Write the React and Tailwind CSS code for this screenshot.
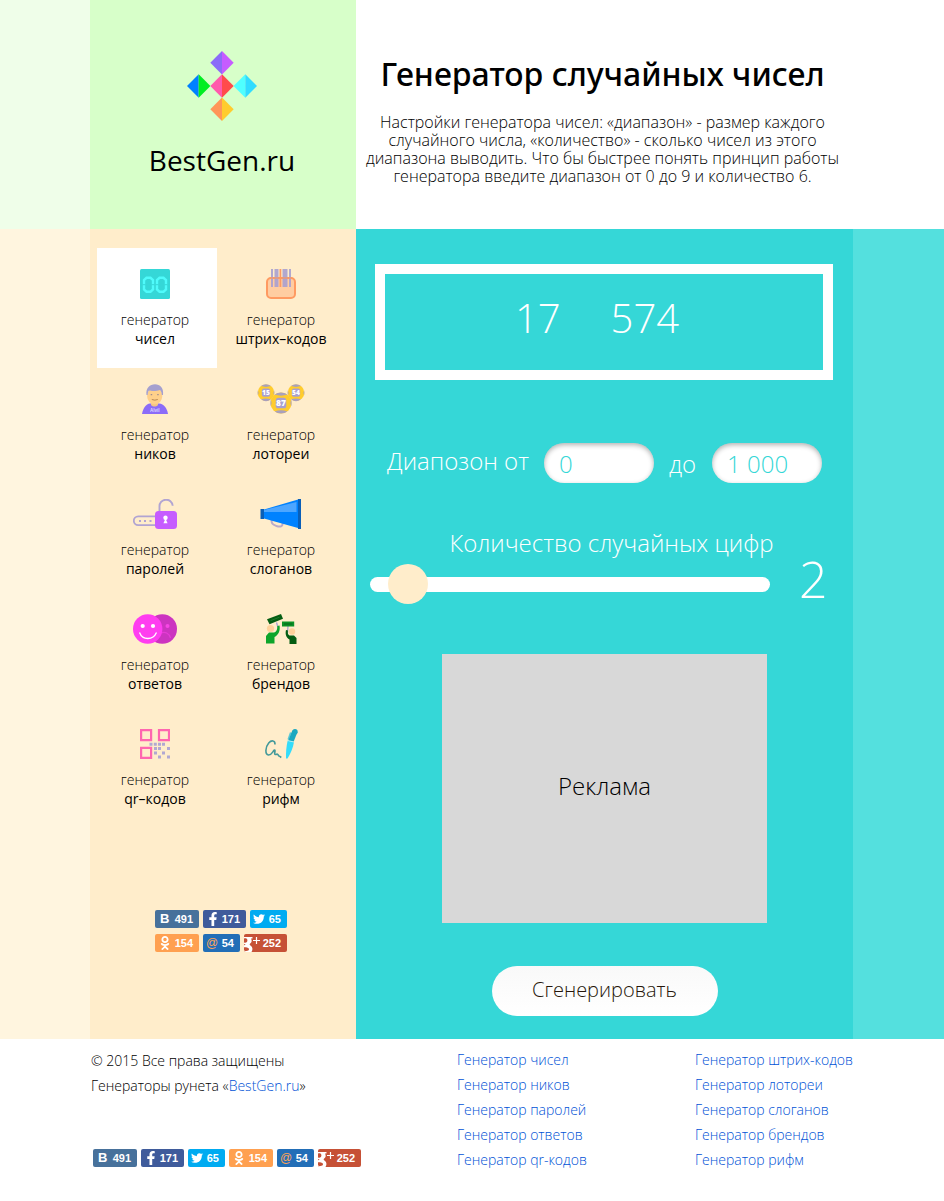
import { useState } from "react";
import { FaFacebookF, FaTwitter, FaOdnoklassniki } from "react-icons/fa";

function Logo() {
  return (
    <svg width="70" height="70" viewBox="0 0 70 70" aria-hidden="true">
      <path d="M35 0v23.4L23.3 11.7z" fill="#8b6cf8" />
      <path d="M35 0v23.4l11.7-11.7z" fill="#c65cff" />
      <path d="M11.7 23.3v23.4L0 35z" fill="#0080ff" />
      <path d="M11.7 23.3v23.4L23.4 35z" fill="#00ee22" />
      <path d="M35 23.3v23.4L23.3 35z" fill="#ff5aac" />
      <path d="M35 23.3v23.4L46.7 35z" fill="#ff4b4b" />
      <path d="M58.3 23.3v23.4L46.6 35z" fill="#4fffff" />
      <path d="M58.3 23.3v23.4L70 35z" fill="#30dcff" />
      <path d="M35 46.6V70L23.3 58.3z" fill="#ff9658" />
      <path d="M35 46.6V70l11.7-11.7z" fill="#ffcc2e" />
    </svg>
  );
}

function NumbersIcon() {
  return (
    <svg width="30" height="30" viewBox="0 0 30 30" aria-hidden="true">
      <rect width="30" height="30" rx="1.5" fill="#35d7d7" />
      <g fill="none" stroke="#4ffbfb" strokeWidth="2.400">
        <path d="M6.500 8.800h4L13 11v9.500L10.500 22.700h-4L4 20.500V11z" />
        <path d="M19.500 8.800h4L26 11v9.500l-2.500 2.200h-4L17 20.500V11z" />
      </g>
      <path d="M2.500 15.700h3M11.500 15.700h3M15.500 15.700h3M24.500 15.700h3" stroke="#35d7d7" strokeWidth="1" />
    </svg>
  );
}

function BarcodeIcon() {
  return (
    <svg width="30" height="30" viewBox="0 0 30 30" aria-hidden="true">
      <rect x="1" y="9" width="28" height="20" rx="4" fill="#ffcda1" stroke="#ff9a61" strokeWidth="2" />
      <path d="M5 0h2v18H5zM8.500 0h4v18h-4zM16.500 0h5v18h-5zM23 0h2v18h-2z" fill="#a9a0cf" opacity=".9" />
      <path d="M13.500 0h1.800v18h-1.800z" fill="#ff9a61" />
      <path d="M4 9h22" stroke="#ff9a61" strokeWidth="1.500" opacity=".75" />
    </svg>
  );
}

function NickIcon() {
  return (
    <svg width="28" height="30" viewBox="0 0 28 30" aria-hidden="true">
      <path d="M1 30c1-6 4-10 8-10.500h9c5 .5 8 4.500 9 10.500z" fill="#8b6cf8" />
      <path d="M10 17h7v4c-2 2-5 2-7 0z" fill="#f4c682" />
      <ellipse cx="13.700" cy="12" rx="7.600" ry="8.500" fill="#ffd08a" />
      <path d="M5.500 11C4.500 4 9 .3 14 .3S23 4 22 11h-1.200c0-2.500-.8-4-2-5C15 7.500 10 7 8 6.500 7 7.500 6.800 9 6.700 11z" fill="#a5a0cf" />
      <path d="M9.700 10.700h1.500M16.200 10.700h1.500" stroke="#a08d90" strokeWidth="1.300" />
      <path d="M10.800 15.500q3 1.300 6 0" stroke="#b98a55" strokeWidth="1" fill="none" />
      <text x="9" y="27.500" fontSize="4.500" fontWeight="700" fill="#ddd4ff" fontFamily="Liberation Sans, sans-serif">Alvil</text>
    </svg>
  );
}

function Ball({ cx, cy, r, label }) {
  return (
    <g>
      <circle cx={cx} cy={cy} r={r} fill="#ffcc2e" />
      <path
        d={`M${cx - r * 0.6} ${cy - r * 0.8}A${r} ${r} 0 0 1 ${cx + r * 0.6} ${cy - r * 0.8}Q${cx} ${cy - r * 0.6} ${cx - r * 0.6} ${cy - r * 0.8}z`}
        fill="#a9a0bd"
      />
      <path
        d={`M${cx - r * 0.6} ${cy + r * 0.8}A${r} ${r} 0 0 0 ${cx + r * 0.6} ${cy + r * 0.8}Q${cx} ${cy + r * 0.6} ${cx - r * 0.6} ${cy + r * 0.8}z`}
        fill="#a9a0bd"
      />
      <path
        d={`M${cx - r} ${cy - r * 0.3}Q${cx - r * 0.8} ${cy} ${cx - r} ${cy + r * 0.3}zM${cx + r} ${cy - r * 0.3}Q${cx + r * 0.8} ${cy} ${cx + r} ${cy + r * 0.3}z`}
        fill="#a9a0bd"
      />
      <rect x={cx - r * 0.5} y={cy - r * 0.5} width={r} height={r} rx={r * 0.25} fill="#a9a0cf" />
      <text
        x={cx}
        y={cy + r * 0.29}
        fontSize={r * 0.8}
        fontWeight="800"
        fill="#fff"
        textAnchor="middle"
        fontFamily="Open Sans, sans-serif"
      >
        {label}
      </text>
    </g>
  );
}

function LotteryIcon() {
  return (
    <svg width="48" height="30" viewBox="0 0 48 30" aria-hidden="true">
      <Ball cx={9} cy={8.7} r={8.3} label="15" />
      <Ball cx={39} cy={8.7} r={8.3} label="54" />
      <Ball cx={24} cy={19} r={10.5} label="87" />
    </svg>
  );
}

function PasswordIcon() {
  return (
    <svg width="44" height="30" viewBox="0 0 44 30" aria-hidden="true">
      <path d="M22 17.300H5.200a4.400 4.400 0 0 0 0 8.800H22" fill="none" stroke="#b1a4d2" strokeWidth="1.800" />
      <path d="M6 20.900h2v2H6zM11 20.900h2v2h-2zM16.500 20.900h2v2h-2z" fill="#b1a4d2" />
      <path d="M26.500 12.500V7.800a6.600 6.600 0 0 1 13.200-1" fill="none" stroke="#b1a4d2" strokeWidth="1.900" />
      <rect x="22" y="12" width="22" height="18" rx="3.500" fill="#c65cff" />
      <circle cx="32.500" cy="18.800" r="2.200" fill="#fff" />
      <path d="M31.700 19h1.600v2.500l1.300 2.800h-4.200l1.300-2.800z" fill="#fff" />
    </svg>
  );
}

function SloganIcon() {
  return (
    <svg width="42" height="30" viewBox="0 0 42 30" aria-hidden="true">
      <path d="M11.500 21c0 4 1.500 4.500 5 6 3.500 1.300 6.500.5 6-3" fill="none" stroke="#b9aacb" strokeWidth="2" />
      <path d="M4 10.500 38 .5V29L4 19.500z" fill="#0082ff" />
      <path d="M4 11 36.500 3V13H4z" fill="#4da6ff" />
      <path d="M38 0h3v30h-3zM.5 10H4v10H.5z" fill="#0a5fb8" />
    </svg>
  );
}

function AnswerIcon() {
  return (
    <svg width="44" height="30" viewBox="0 0 44 30" aria-hidden="true">
      <circle cx="29.300" cy="15" r="14.700" fill="#cc34c0" />
      <circle cx="34.500" cy="12" r="2" fill="#f846e6" />
      <path d="M28 19c4-1.500 8 0 9.500 5" fill="none" stroke="#e63cd6" strokeWidth="1.200" />
      <circle cx="14.700" cy="15" r="14.700" fill="#ff3df0" />
      <circle cx="9.700" cy="12" r="2.100" fill="#fff" />
      <circle cx="20" cy="12" r="2.100" fill="#fff" />
      <path d="M6.500 18.500c3 8 13.500 8 17 0" fill="none" stroke="#fff" strokeWidth="1.300" />
    </svg>
  );
}

function BrandIcon() {
  return (
    <svg width="32" height="30" viewBox="0 0 32 30" aria-hidden="true">
      <path d="M11.500 8.500 13.500 15M23 12l-.5 7" stroke="#a9a0cf" strokeWidth="1.300" />
      <path d="m2 5.300 14-5.300 2 4.700L4.500 10.200z" fill="#055d13" />
      <path d="m5.500 6.700 9-3.500" stroke="#1f7a2d" strokeWidth="1" />
      <path d="M17 7.500h12.200v5H17z" fill="#0b9226" />
      <path d="M19 10h8.500" stroke="#0a6a1b" strokeWidth="1.200" />
      <circle cx="5.500" cy="14.500" r="3.600" fill="#ffd19b" />
      <circle cx="27" cy="17.500" r="3.200" fill="#ffd19b" />
      <path d="M1 29.500V22l3-3.500h5c2.500-.5 3.500-3.500 3.300-6.500l2.200-.5c1 5-1 9.500-5 11.500v6.500z" fill="#0ea52b" />
      <path d="M31.500 30v-6l-2.500-2.500h-4.500c-1.500-.5-2-2.500-1.500-5l-2-.5c-1 4 0 7.500 3.500 9.500V30z" fill="#055d13" />
    </svg>
  );
}

function QrIcon() {
  return (
    <svg width="30" height="30" viewBox="0 0 30 30" aria-hidden="true">
      <g fill="none" stroke="#ff66b0" strokeWidth="2.200">
        <path d="M1.100 1.100h10v10h-10zM19 1.100h10v10H19zM1.100 18.900h10v10h-10z" />
      </g>
      <path
        d="M9.500 13.800h3v3h-3zM13.800 13.800h3v3h-3zM18 13.800h3v3h-3zM22 13.800h3v3h-3zM14 18h3v3h-3zM18 18h3v3h-3zM27 18h3v3h-3zM14 22.500h3v3h-3zM22 22.500h3v3h-3zM18 26.500h3v3h-3zM27 26.500h3v3h-3z"
        fill="#b1a8d2"
      />
    </svg>
  );
}

function RhymeIcon() {
  return (
    <svg width="34" height="30" viewBox="0 0 34 30" aria-hidden="true">
      <path
        d="M11 15.500c.3-4.500-3.800-4.500-6.300-1.500-3.700 4.500-3.700 11.500-.2 12 3.200.2 4-3.500 6-5 1.500 0-1 4.500 1 4.500 1.500 0 1.300-1 2.300 0s.2 1.500 1.700 1.700l1.800 1.300"
        fill="none"
        stroke="#43999a"
        strokeWidth="1.600"
      />
      <path d="m26.700 3.500-2.500 7" stroke="#5cc9d6" strokeWidth="1.600" />
      <path d="m28.300 1.500 5.200 1.500-4 10-5.500-1z" fill="#1ba8c0" />
      <circle cx="31" cy="2.700" r="2.700" fill="#1ba8c0" />
      <path d="m23.700 11.500 6.300 1.500c-1 6-3.500 12-6.500 16.500h-1.500c-.2-6 .3-12 1.700-18z" fill="#34dcfa" />
      <path d="m23.700 11.500 6.300 1.500" stroke="#c8f2ef" strokeWidth=".9" />
    </svg>
  );
}

const generators = [
  { name: "чисел", Icon: NumbersIcon, active: true },
  { name: "штрих–кодов", Icon: BarcodeIcon },
  { name: "ников", Icon: NickIcon },
  { name: "лотореи", Icon: LotteryIcon },
  { name: "паролей", Icon: PasswordIcon },
  { name: "слоганов", Icon: SloganIcon },
  { name: "ответов", Icon: AnswerIcon },
  { name: "брендов", Icon: BrandIcon },
  { name: "qr–кодов", Icon: QrIcon },
  { name: "рифм", Icon: RhymeIcon },
];

const footerLinks = [
  ["чисел", "ников", "паролей", "ответов", "qr-кодов"],
  ["штрих-кодов", "лотореи", "слоганов", "брендов", "рифм"],
];

function GooglePlus() {
  return (
    <svg width="17" height="18" viewBox="0 0 17 18" aria-hidden="true">
      <path
        fillRule="evenodd"
        d="M0 3h8.500v1.500H7c1.200 2 .8 4-.8 5-1 .8-.6 1.400.6 2.300 2 1.500 2.200 4.200.7 6.200H0v-1.500c2.500 1 5 .5 5-1.200 0-1.600-2-2-5-2v-2c.8-.2 1.200-.4 1.600-1-.6 0-1.100-.1-1.600-.4V8.500c2 .6 3.500-.3 3.400-2.200C3.300 4.500 1.700 4 0 4.500z"
        fill="#fff"
      />
      <path d="M9 6.500h7M12.500 3v7" stroke="#fff" strokeWidth="1.200" />
    </svg>
  );
}

function Share({ className, label, count, children }) {
  return (
    <a
      href="#"
      aria-label={`${label}: ${count}`}
      className={`flex h-[18px] items-center justify-between overflow-hidden rounded-[2px] pr-1.5 font-['Liberation_Sans',Arial,sans-serif] text-[11px] leading-[18px] font-bold text-white ${className}`}
    >
      {children}
      <span>{count}</span>
    </a>
  );
}

function ShareButtons({ className }) {
  return (
    <div className={`flex flex-wrap ${className}`}>
      <Share className="w-11 bg-[#47719b] pl-[5px]" label="ВКонтакте" count="491">
        <span className="text-[13px]">B</span>
      </Share>
      <Share className="w-[43px] bg-[#3f5b9b] pl-[3px]" label="Facebook" count="171">
        <FaFacebookF size={14} />
      </Share>
      <Share className="w-[37px] bg-[#00abf1] pl-[3px]" label="Twitter" count="65">
        <FaTwitter size={12} />
      </Share>
      <Share className="w-11 bg-[#ffa050] pl-[3px]" label="Одноклассники" count="154">
        <FaOdnoklassniki size={14} />
      </Share>
      <Share className="w-[37px] bg-[#226eb7] pl-[3px]" label="Мой Мир" count="54">
        <span className="text-[12px] font-normal text-[#ffa557]">@</span>
      </Share>
      <Share className="w-[43px] bg-[#c65136]" label="Google+" count="252">
        <GooglePlus />
      </Share>
    </div>
  );
}

export default function App() {
  const [from, setFrom] = useState("0");
  const [to, setTo] = useState("1 000");
  const [amount, setAmount] = useState(2);

  return (
    <div className="min-h-screen bg-white font-['Open_Sans',sans-serif] font-light text-black">
      <header className="grid grid-cols-[90fr_266px_497px_91fr]">
        <div className="bg-[#effee9]" />
        <a href="#" className="flex flex-col items-center bg-[#d7ffc9] pt-[51px] pr-0.5 pb-12">
          <Logo />
          <span className="mt-[19px] mb-px text-[28px] leading-10 font-normal">BestGen.ru</span>
        </a>
        <div className="px-2 pt-[54px] text-center">
          <h1 className="pr-1 font-['Noto_Sans',sans-serif] text-[32px] leading-10 font-medium whitespace-nowrap">
            Генератор случайных чисел
          </h1>
          <p className="mt-[19px] pr-1 text-base leading-[18px]">
            Настройки генератора чисел: «диапазон» - размер каждого случайного числа, «количество» -
            сколько чисел из этого диапазона выводить. Что бы быстрее понять принцип работы генератора
            введите диапазон от 0 до 9 и количество 6.
          </p>
        </div>
      </header>

      <main className="grid grid-cols-[90fr_266px_497px_91fr]">
        <div className="bg-[#fff5df]" />
        <aside className="bg-[#ffedcb] pt-[19px] pb-5">
          <nav className="grid auto-rows-[115px] grid-cols-[120px_120px] gap-x-1.5 pl-[7px]">
            {generators.map(({ name, Icon, active }) => (
              <a
                key={name}
                href="#"
                className={`flex h-[120px] flex-col items-center pt-[21px] pr-1 text-center text-sm leading-[19px] ${active ? "bg-white" : ""}`}
              >
                <Icon />
                <span className="mt-[11px]">генератор</span>
                <span className="font-normal">{name}</span>
              </a>
            ))}
          </nav>
          <ShareButtons className="mt-[87px] ml-[65px] w-[134px] gap-x-1 gap-y-1.5" />
        </aside>

        <form
          className="flex flex-col bg-[#35d7d7] pt-[35px] pb-[23px] text-white"
          onSubmit={(event) => event.preventDefault()}
        >
          <output className="mr-5 ml-[19px] flex h-[116px] items-center justify-center gap-[50px] border-10 border-white pr-3.5 pb-2 text-[40px] leading-[54px]">
            <span>17</span>
            <span>574</span>
          </output>

          <div className="mt-[63px] flex items-center pl-[31px] text-2xl">
            <label htmlFor="from" className="pb-1">
              Диапозон от
            </label>
            <input
              id="from"
              value={from}
              onChange={(event) => setFrom(event.target.value)}
              className="ml-[15px] h-10 w-[110px] rounded-full bg-white pl-[15px] text-[#35d7d7] shadow-[inset_0_2px_5px_rgba(0,0,0,0.3)] outline-none"
            />
            <label htmlFor="to" className="ml-[15px] pt-0.5">
              до
            </label>
            <input
              id="to"
              value={to}
              onChange={(event) => setTo(event.target.value)}
              className="ml-4 h-10 w-[110px] rounded-full bg-white pl-[15px] text-[#35d7d7] shadow-[inset_0_2px_5px_rgba(0,0,0,0.3)] outline-none"
            />
          </div>

          <label htmlFor="amount" className="mt-[49px] pl-3.5 text-center text-2xl leading-[22px]">
            Количество случайных цифр
          </label>
          <div className="flex items-end pl-3.5">
            <input
              id="amount"
              type="range"
              min="1"
              max="21"
              value={amount}
              onChange={(event) => setAmount(Number(event.target.value))}
              className="h-10 w-[400px] cursor-pointer appearance-none bg-transparent [&::-webkit-slider-runnable-track]:h-[15px] [&::-webkit-slider-runnable-track]:rounded-full [&::-webkit-slider-runnable-track]:bg-white [&::-webkit-slider-thumb]:-mt-[13px] [&::-webkit-slider-thumb]:size-10 [&::-webkit-slider-thumb]:appearance-none [&::-webkit-slider-thumb]:rounded-full [&::-webkit-slider-thumb]:bg-[#ffedcb]"
            />
            <span className="ml-[29px] text-[50px] leading-[50px]">{amount}</span>
          </div>

          <div className="mx-auto mt-[50px] flex h-[269px] w-[325px] items-center justify-center bg-[#d8d8d8] pb-1.5 text-2xl text-black">
            Реклама
          </div>

          <button
            type="submit"
            className="mx-auto mt-[43px] h-[50px] w-[226px] cursor-pointer rounded-full bg-linear-to-b from-[#f9f9f9] to-white pb-0.5 text-xl text-[#26160a]"
          >
            Сгенерировать
          </button>
        </form>
        <div className="bg-[#54e0de]" />
      </main>

      <footer className="grid grid-cols-[90fr_266px_497px_91fr] pt-[9px] text-sm leading-[25px]">
        <div className="col-start-2 pl-px">
          <p>© 2015 Все права защищены</p>
          <p>
            Генераторы рунета «
            <a href="#" className="text-[#0052d6]">
              BestGen.ru
            </a>
            »
          </p>
          <ShareButtons className="mt-[51px] ml-0.5 w-[270px] gap-1" />
        </div>
        <nav className="-mt-px grid grid-cols-[238px_1fr] pl-[101px] whitespace-nowrap text-[#0052d6]">
          {footerLinks.map((names) => (
            <ul key={names[0]}>
              {names.map((name) => (
                <li key={name}>
                  <a href="#">Генератор {name}</a>
                </li>
              ))}
            </ul>
          ))}
        </nav>
      </footer>
    </div>
  );
}
